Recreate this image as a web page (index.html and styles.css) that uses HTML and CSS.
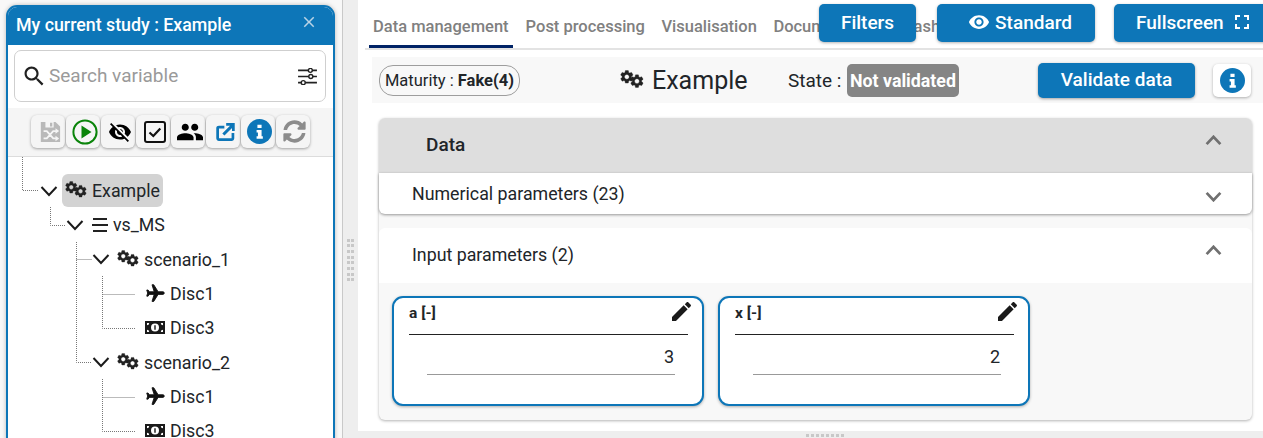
FILE: index.html
```html
<!DOCTYPE html>
<html lang="en">
<head>
<meta charset="utf-8">
<title>Study</title>
<link rel="stylesheet" href="styles.css">
</head>
<body>
<svg class="defs" aria-hidden="true">
  <symbol id="gear" viewBox="0 0 24 24"><path d="M19.14 12.94c.04-.3.06-.61.06-.94 0-.32-.02-.64-.07-.94l2.03-1.58c.18-.14.23-.41.12-.61l-1.92-3.32c-.12-.22-.37-.29-.59-.22l-2.39.96c-.5-.38-1.03-.7-1.62-.94l-.36-2.54c-.04-.24-.24-.41-.48-.41h-3.84c-.24 0-.43.17-.47.41l-.36 2.54c-.59.24-1.13.57-1.62.94l-2.39-.96c-.22-.08-.47 0-.59.22L2.74 8.87c-.12.21-.08.47.12.61l2.03 1.58c-.05.3-.09.63-.09.94s.02.64.07.94l-2.03 1.58c-.18.14-.23.41-.12.61l1.92 3.32c.12.22.37.29.59.22l2.39-.96c.5.38 1.03.7 1.62.94l.36 2.54c.05.24.24.41.48.41h3.84c.24 0 .44-.17.47-.41l.36-2.54c.59-.24 1.13-.56 1.62-.94l2.39.96c.22.08.47 0 .59-.22l1.92-3.32c.12-.22.07-.47-.12-.61l-2.01-1.58zM12 15.6c-1.98 0-3.6-1.62-3.6-3.6s1.62-3.6 3.6-3.6 3.6 1.62 3.6 3.6-1.62 3.6-3.6 3.6z"/></symbol>
  <symbol id="cogs" viewBox="0 0 22 17"><use href="#gear" x="-1" y="-1" width="14.500" height="14.500"/><use href="#gear" x="8.300" y="3" width="14.500" height="14.500"/></symbol>
  <symbol id="chev" viewBox="0 0 18 12"><path d="M1.500 2 9 10 16.500 2" fill="none" stroke="currentColor"/></symbol>
  <symbol id="plane" viewBox="0 0 24 24"><path transform="rotate(90 12 12)" d="M21 16v-2l-8-5V3.500c0-.83-.67-1.500-1.500-1.500S10 2.670 10 3.500V9l-8 5v2l8-2.500V19l-2 1.500V22l3.500-1 3.500 1v-1.500L13 19v-5.500l8 2.500z"/></symbol>
  <symbol id="bill" viewBox="0 0 20 13"><path fill-rule="evenodd" d="M0 0h20v13H0zM10 2.500a4 4 0 1 0 0 8 4 4 0 0 0 0-8zM2 2v2.200A2.200 2.200 0 0 0 4.200 2zM18 2h-2.200A2.200 2.200 0 0 0 18 4.200zM2 11h2.200A2.200 2.200 0 0 0 2 8.800zM18 11V8.800A2.200 2.200 0 0 0 15.800 11z"/><path d="M9.300 4.300h1.400v4.400H9.300z"/></symbol>
  <symbol id="info" viewBox="0 0 24 24"><circle cx="12" cy="12" r="12" fill="#0d76b8"/><path fill="#fff" d="M10 5.500h4v3.200h-4zM9.200 10.500H14v6h1.200v2.500H9.200v-2.500h1.300v-3.500H9.200z"/></symbol>
</svg>

<div class="app">
  <aside class="side">
    <section class="panel">
      <header class="panel-head">
        <span class="panel-title">My current study : Example</span>
        <svg class="close" viewBox="0 0 24 24"><path d="M19 6.410 17.590 5 12 10.590 6.410 5 5 6.410 10.590 12 5 17.590 6.410 19 12 13.410 17.590 19 19 17.590 13.410 12z"/></svg>
      </header>
      <div class="search-wrap">
        <div class="search">
          <svg class="search-icon" viewBox="2.500 2.500 18.500 18.500"><path d="M15.500 14h-.79l-.28-.27C15.410 12.590 16 11.110 16 9.500 16 5.910 13.090 3 9.500 3S3 5.910 3 9.500 5.910 16 9.500 16c1.610 0 3.090-.59 4.230-1.570l.27.28v.79l5 4.990L20.490 19l-4.990-5zm-6 0C7.010 14 5 11.990 5 9.500S7.010 5 9.500 5 14 7.010 14 9.500 11.990 14 9.500 14z"/></svg>
          <span class="search-text">Search variable</span>
          <svg class="tune" viewBox="0 0 20 18"><path d="M0 2.500h20M0 9h20M0 15.500h20" stroke="#222" stroke-width="1.700" fill="none"/><circle cx="13" cy="2.500" r="2.100" fill="#fff" stroke="#222" stroke-width="1.500"/><circle cx="13.500" cy="9" r="2.100" fill="#fff" stroke="#222" stroke-width="1.500"/><circle cx="5.500" cy="15.500" r="2.100" fill="#fff" stroke="#222" stroke-width="1.500"/></svg>
        </div>
      </div>
      <div class="tools">
        <button class="tool"><svg class="ico-22" viewBox="0 0 24 24"><path fill="#b9b9b9" d="M2 1h16l5 5v17H2z"/><path fill="#f5f5f5" d="M7 1h9v6H7z"/><path fill="#b9b9b9" d="M12 2h2.500v4H12z"/><path d="M5 11h3.500l7 8H19M5 19h3.500l7-8H19" stroke="#f5f5f5" stroke-width="2" fill="none"/><path fill="#f5f5f5" d="m18 8 4 3-4 3zM18 16l4 3-4 3z"/></svg></button>
        <button class="tool"><svg class="ico-26" viewBox="0 0 26 26"><circle cx="13" cy="13" r="11.600" fill="none" stroke="#0a840a" stroke-width="2"/><path fill="#0a840a" d="M9.500 6.500 19.500 13 9.500 19.500z"/></svg></button>
        <button class="tool"><svg class="ico-24" viewBox="0 0 24 24"><path d="M12 7c2.760 0 5 2.240 5 5 0 .65-.13 1.260-.36 1.830l2.920 2.920c1.510-1.260 2.700-2.890 3.430-4.750-1.730-4.390-6-7.500-11-7.500-1.400 0-2.740.25-3.980.7l2.160 2.160C10.740 7.130 11.350 7 12 7zM2 4.270l2.280 2.280.46.46C3.080 8.300 1.780 10.020 1 12c1.730 4.390 6 7.500 11 7.500 1.550 0 3.030-.3 4.380-.84l.42.42L19.730 22 21 20.730 3.270 3 2 4.270zM7.530 9.800l1.550 1.550c-.05.21-.08.43-.08.65 0 1.660 1.340 3 3 3 .22 0 .44-.03.65-.08l1.550 1.550c-.67.33-1.410.53-2.200.53-2.760 0-5-2.240-5-5 0-.79.2-1.530.53-2.200zm4.310-.78 3.150 3.150.02-.16c0-1.660-1.340-3-3-3l-.17.01z"/></svg></button>
        <button class="tool"><svg class="ico-22" viewBox="0 0 22 22"><rect x="1" y="1" width="20" height="20" rx="2" fill="none" stroke="#111" stroke-width="2"/><path d="m5.500 11.500 3.800 3.500 7-7.500" fill="none" stroke="#111" stroke-width="2.200"/></svg></button>
        <button class="tool"><svg class="ico-26" viewBox="1 1 22 22"><path d="M16 11c1.660 0 2.990-1.340 2.990-3S17.660 5 16 5c-1.660 0-3 1.340-3 3s1.340 3 3 3zm-8 0c1.660 0 2.990-1.340 2.990-3S9.660 5 8 5C6.340 5 5 6.340 5 8s1.340 3 3 3zm0 2c-2.330 0-7 1.170-7 3.500V19h14v-2.500c0-2.330-4.670-3.500-7-3.500zm8 0c-.29 0-.62.02-.97.05 1.160.84 1.970 1.970 1.970 3.450V19h6v-2.500c0-2.330-4.670-3.500-7-3.500z"/></svg></button>
        <button class="tool"><svg class="ico-19 blue" viewBox="2 2 20.500 20"><path d="M19 19H5V8h6V5H5c-1.660 0-3 .9-3 2.500V19c0 1.600 1.340 3 3 3h14c1.660 0 3-1.400 3-3v-6h-3v6z"/><path d="M13 2v3h4.300l-8.600 8.600 2.400 2.400L19.500 7.500V11H22.500V2z"/></svg></button>
        <button class="tool tool-tight"><svg class="ico-25"><use href="#info"/></svg></button>
        <button class="tool tool-tight"><svg class="ico-23 grey" viewBox="0 0 512 512"><path d="M370.720 133.280C339.458 104.008 298.888 87.962 255.848 88c-77.458.068-144.328 53.178-162.791 126.850-1.344 5.363-6.122 9.150-11.651 9.150H24.103c-7.498 0-13.194-6.807-11.807-14.176C33.933 94.924 134.813 8 256 8c66.448 0 126.791 26.136 171.315 68.685L463.030 40.970C478.149 25.851 504 36.559 504 57.941V192c0 13.255-10.745 24-24 24H345.941c-21.382 0-32.090-25.851-16.971-40.971l41.750-41.749zM32 296h134.059c21.382 0 32.090 25.851 16.971 40.971l-41.750 41.750c31.262 29.273 71.835 45.319 114.876 45.280 77.418-.070 144.315-53.144 162.787-126.849 1.344-5.363 6.122-9.150 11.651-9.150h57.304c7.498 0 13.194 6.807 11.807 14.176C478.067 417.076 377.187 504 256 504c-66.448 0-126.791-26.136-171.315-68.685L48.970 471.030C33.851 486.149 8 475.441 8 454.059V320c0-13.255 10.745-24 24-24z"/></svg></button>
      </div>
      <div class="tree">
        <svg class="tree-lines" viewBox="0 0 327 290">
          <path d="M14.500 0V33.500H31M42.500 50V68.500H58M68.500 85V205.500H84M68.500 102.500H84M94.500 119V171.500H127M94.500 137.500H127M94.500 222V274.500H127M94.500 240.500H127"/>
        </svg>
        <div class="node l0"><svg class="chev"><use href="#chev"/></svg><span class="pill"><svg class="cogs"><use href="#cogs"/></svg>Example</span></div>
        <div class="node l1"><svg class="chev"><use href="#chev"/></svg><svg class="list" viewBox="0 0 18 16"><path d="M2 2h14M1 8h16M2 14h14" stroke="#222" stroke-width="2"/></svg>vs_MS</div>
        <div class="node l2"><svg class="chev"><use href="#chev"/></svg><svg class="cogs"><use href="#cogs"/></svg>scenario_1</div>
        <div class="node l3"><svg class="plane"><use href="#plane"/></svg>Disc1</div>
        <div class="node l3"><svg class="bill"><use href="#bill"/></svg>Disc3</div>
        <div class="node l2"><svg class="chev"><use href="#chev"/></svg><svg class="cogs"><use href="#cogs"/></svg>scenario_2</div>
        <div class="node l3"><svg class="plane"><use href="#plane"/></svg>Disc1</div>
        <div class="node l3"><svg class="bill"><use href="#bill"/></svg>Disc3</div>
      </div>
    </section>
  </aside>

  <div class="gutter"><div class="dots-v"><i></i><i></i><i></i><i></i><i></i><i></i><i></i><i></i><i></i><i></i><i></i><i></i><i></i><i></i><i></i><i></i></div></div>

  <main class="main">
    <div class="content">
      <nav class="tabs">
        <span class="tab active">Data management</span>
        <span class="tab">Post processing</span>
        <span class="tab">Visualisation</span>
        <span class="tab">Documentation</span>
        <span class="tab">Dashboard</span>
      </nav>
      <div class="float-actions">
        <button class="btn btn-filters">Filters</button>
        <button class="btn btn-standard"><svg class="eye" viewBox="0 0 24 24"><path d="M12 4.500C7 4.500 2.730 7.610 1 12c1.730 4.390 6 7.500 11 7.500s9.270-3.110 11-7.500c-1.730-4.390-6-7.500-11-7.500zM12 17c-2.760 0-5-2.240-5-5s2.240-5 5-5 5 2.240 5 5-2.240 5-5 5zm0-8c-1.660 0-3 1.340-3 3s1.340 3 3 3 3-1.340 3-3-1.340-3-3-3z"/></svg>Standard</button>
        <button class="btn btn-full">Fullscreen<svg class="fs" viewBox="5 5 14 14"><path d="M7 14H5v5h5v-2H7v-3zm-2-4h2V7h3V5H5v5zm12 7h-3v2h5v-5h-2v3zM14 5v2h3v3h2V5h-5z"/></svg></button>
      </div>
      <div class="bar">
        <span class="chip">Maturity :&nbsp;<b>Fake(4)</b></span>
        <span class="title"><svg class="cogs-lg"><use href="#cogs"/></svg>Example</span>
        <span class="state">State :</span>
        <span class="badge">Not validated</span>
        <button class="btn-validate">Validate data</button>
        <button class="btn-info"><svg class="info-ico"><use href="#info"/></svg></button>
      </div>
      <section class="accordion">
        <div class="acc-head"><span>Data</span><svg class="acc-chev up"><use href="#chev"/></svg></div>
        <div class="acc-row"><span>Numerical parameters (23)</span><svg class="acc-chev"><use href="#chev"/></svg></div>
        <div class="acc-group">
          <div class="acc-row2"><span>Input parameters (2)</span><svg class="acc-chev up"><use href="#chev"/></svg></div>
          <div class="cards">
            <article class="card">
              <div class="card-head"><span>a [-]</span><svg class="pencil" viewBox="3 3 18 18"><path d="M3 17.250V21h3.750L17.810 9.940l-3.750-3.750L3 17.250zM20.710 7.040c.39-.39.39-1.020 0-1.410l-2.340-2.340c-.39-.39-1.020-.39-1.410 0l-1.830 1.830 3.750 3.750 1.830-1.830z"/></svg></div>
              <div class="card-value">3</div>
            </article>
            <article class="card">
              <div class="card-head"><span>x [-]</span><svg class="pencil" viewBox="3 3 18 18"><path d="M3 17.250V21h3.750L17.810 9.940l-3.750-3.750L3 17.250zM20.710 7.040c.39-.39.39-1.020 0-1.410l-2.340-2.340c-.39-.39-1.020-.39-1.410 0l-1.830 1.830 3.750 3.750 1.830-1.830z"/></svg></div>
              <div class="card-value">2</div>
            </article>
          </div>
        </div>
      </section>
    </div>
    <div class="bottom"><div class="dots-h"><i></i><i></i><i></i><i></i><i></i><i></i><i></i><i></i></div></div>
  </main>
</div>
</body>
</html>
```

FILE: styles.css
```css
* { box-sizing: border-box; }
html, body { margin: 0; height: 100%; }
body { font-family: Roboto, "Liberation Sans", sans-serif; color: #212529; background: #f7f7f7; overflow: hidden; }
.defs { display: none; }
button { font-family: inherit; border: 0; padding: 0; cursor: pointer; }

.app { display: flex; height: 438px; width: 1263px; overflow: hidden; }

/* left */
.side { flex: 0 0 343px; height: 438px; padding: 5px 7px 0 6px; border-right: 1px solid #c9c9c9; background: #f8f8f8; }
.panel { height: 460px; border: 2px solid #0d76b8; border-radius: 11px 11px 0 0; background: #fff; overflow: hidden; box-shadow: 0 0 4px rgba(0,0,0,.25); display: flex; flex-direction: column; }
.panel-head { flex: 0 0 38px; background: #0d76b8; color: #fff; display: flex; align-items: center; justify-content: space-between; padding: 0 15px 3px 8px; }
.panel-title { font-size: 17.800px; font-weight: 500; }
.close { width: 18px; height: 18px; fill: #b9d3e6; margin-top: -5px; }
.search-wrap { flex: 0 0 63px; padding: 5px 7px 0 6px; background: #fff; }
.search { height: 52px; border: 1px solid #cfcfcf; border-radius: 7px; display: flex; align-items: center; padding: 0 8px 0 9px; }
.search-icon { width: 20px; height: 20px; fill: #212121; flex: none; }
.search-text { font-size: 19px; color: #9a9a9a; margin-left: 5px; flex: 1; margin-top: -1px; }
.tune { width: 19px; height: 17px; flex: none; }
.tools { flex: 0 0 49px; background: #f5f5f5; border-bottom: 1px solid #dcdcdc; display: flex; gap: 1px; padding: 7px 0 0 23px; align-items: flex-start; }
.tool { width: 34px; height: 33px; padding-left: 4px; background: #f5f5f5; border-radius: 6px; box-shadow: 0 1px 3px rgba(0,0,0,.35); display: flex; align-items: center; justify-content: center; }
.tool-tight { padding-left: 3px; }
.ico-19 { width: 19px; height: 18px; }
.ico-22 { width: 22px; height: 22px; }
.ico-23 { width: 23px; height: 23px; }
.ico-24 { width: 24px; height: 24px; }
.ico-25 { width: 25px; height: 25px; }
.ico-26 { width: 26px; height: 26px; }
.blue { fill: #0d76b8; }
.grey { fill: #8c8c8c; }

.tree { position: relative; padding-top: 16.400px; flex: 1; }
.tree-lines { position: absolute; left: 0; top: 0; width: 327px; height: 290px; fill: none; stroke: #777; stroke-width: 1; stroke-dasharray: 1 1; }
.node { position: relative; height: 34.300px; display: flex; align-items: center; font-size: 17.800px; color: #212529; white-space: nowrap; }
.l0 { padding-left: 32px; }
.l1 { padding-left: 58px; }
.l2 { padding-left: 84px; }
.l3 { padding-left: 137px; }
.chev { width: 18px; height: 12px; color: #1b1b1b; stroke-width: 2; flex: none; margin-right: 4px; }
.pill { display: flex; align-items: center; height: 33px; width: 101px; background: #d3d3d3; border-radius: 6px; padding-left: 3px; }
.cogs { width: 22px; height: 17px; fill: #222; stroke: #222; stroke-width: .5; flex: none; margin-right: 5px; margin-top: -2px; }
.list { width: 18px; height: 16px; flex: none; margin-right: 4px; margin-left: 3px; }
.plane { width: 21px; height: 21px; fill: #111; stroke: #111; stroke-width: 1; margin-right: 4px; flex: none; }
.bill { width: 20px; height: 13px; fill: #1a1a1a; margin-right: 5px; flex: none; }
.l2 .cogs { margin-left: 3px; margin-right: 5px; }

/* gutter */
.gutter { flex: 0 0 15px; background: #eee; display: flex; align-items: center; justify-content: center; padding-top: 82px; }
.dots-v { display: grid; grid-template-columns: 3px 3px; gap: 2.700px 1px; }
.dots-v i { height: 3px; background: #c8c8c8; }

/* main */
.main { flex: 1; min-width: 0; display: flex; flex-direction: column; }
.content { position: relative; height: 431px; background: #fff; overflow: hidden; }
.bottom { height: 7px; background: #eee; display: flex; justify-content: center; align-items: flex-end; padding-bottom: 1px; padding-left: 29px; }
.dots-h { display: flex; gap: 2px; }
.dots-h i { width: 3px; height: 3px; background: #c8c8c8; }

.tabs { height: 50px; margin-left: 7px; border-bottom: 2px solid #e3e3e3; display: flex; padding-left: 4px; }
.tab { height: 48px; padding: 5px 4px 0; margin-right: 8.500px; display: flex; align-items: center; font-size: 16.500px; font-weight: 500; color: #808080; white-space: nowrap; }
.tab.active { border-bottom: 3px solid #002366; padding-top: 8px; margin-right: 9px; }

.float-actions { position: absolute; top: 4px; left: 461px; display: flex; }
.btn { height: 38px; background: #0d76b8; color: #fff; font-size: 19px; font-weight: 500; border-radius: 5px; padding-bottom: 2px; box-shadow: 0 1px 3px rgba(0,0,0,.3); display: flex; align-items: center; justify-content: center; }
.btn-filters { width: 97px; margin-right: 21px; }
.btn-standard { width: 158px; margin-right: 19px; padding-left: 8px; }
.btn-full { width: 170px; justify-content: flex-start; padding-left: 22px; }
.eye { width: 22px; height: 22px; fill: #fff; margin-right: 5px; }
.fs { width: 14px; height: 14px; fill: #fff; margin-left: 11px; }

.bar { margin: 7px 0 0 14px; height: 46px; background: #f8f8f8; display: flex; align-items: center; padding-left: 7px; }
.chip { width: 141px; height: 31px; border: 1px solid #9d9d9d; border-radius: 14px; display: flex; align-items: center; justify-content: center; font-size: 16.500px; white-space: nowrap; }
.chip b { font-weight: 700; }
.title { margin-left: 100px; width: 127px; font-size: 25px; display: flex; align-items: center; white-space: nowrap; }
.cogs-lg { width: 24px; height: 18.500px; fill: #222; stroke: #222; stroke-width: .5; margin-right: 8px; flex: none; margin-top: -2px; }
.state { margin-left: 41px; width: 59px; font-size: 19px; white-space: nowrap; }
.badge { width: 112px; height: 33px; background: #858585; color: #fff; font-size: 17.800px; font-weight: 700; border-radius: 5px; display: flex; align-items: center; justify-content: center; white-space: nowrap; }
.btn-validate { margin-left: 79px; width: 157px; height: 35px; padding-bottom: 2px; background: #0d76b8; color: #fff; font-size: 19px; font-weight: 500; border-radius: 5px; box-shadow: 0 1px 3px rgba(0,0,0,.35); }
.btn-info { margin-left: 18px; width: 38px; height: 33px; background: #fff; border-radius: 5px; box-shadow: 0 1px 3px rgba(0,0,0,.3); display: flex; align-items: center; justify-content: center; }
.info-ico { width: 25px; height: 25px; }

.accordion { margin: 15px 11px 0 21px; height: 302px; background: #f8f8f8; border-radius: 6px; box-shadow: 0 1px 3px rgba(0,0,0,.3); }
.acc-head { height: 55px; background: #dedede; border-radius: 6px 6px 0 0; display: flex; align-items: center; justify-content: space-between; padding: 0 30px 2px 47px; font-size: 19px; font-weight: 500; }
.acc-row { height: 41px; background: #fff; border-radius: 0 0 6px 6px; box-shadow: 0 1px 3px rgba(0,0,0,.4); display: flex; align-items: center; justify-content: space-between; padding: 0 30px 0 33px; font-size: 17.800px; position: relative; }
.acc-group { margin-top: 14px; }
.acc-row2 { height: 55px; background: #fff; border-radius: 6px 6px 0 0; display: flex; align-items: center; justify-content: space-between; padding: 0 30px 2px 33px; font-size: 17.800px; }
.acc-chev { width: 17px; height: 11px; color: #707070; stroke-width: 3; }
.acc-chev.up { transform: rotate(180deg); margin-top: -8px; }
.acc-row .acc-chev { margin-top: 6px; }

.cards { display: flex; gap: 14px; padding: 13px 0 0 13px; }
.card { width: 312px; height: 110px; background: #fff; border: 2px solid #0d76b8; border-radius: 11px; box-shadow: 0 1px 3px rgba(0,0,0,.3); padding: 0 14px 0 15px; }
.card-head { height: 37px; border-bottom: 1px solid #222; display: flex; justify-content: space-between; align-items: flex-start; padding-top: 6px; font-size: 15.500px; font-weight: 700; }
.pencil { width: 19px; height: 19px; fill: #1a1a1a; margin-right: -3px; margin-top: -2px; flex: none; }
.card-value { margin: 0 13px 0 18px; height: 40px; border-bottom: 1px solid #999; display: flex; align-items: center; justify-content: flex-end; font-size: 18px; padding: 3px 1px 0 0; }
```
